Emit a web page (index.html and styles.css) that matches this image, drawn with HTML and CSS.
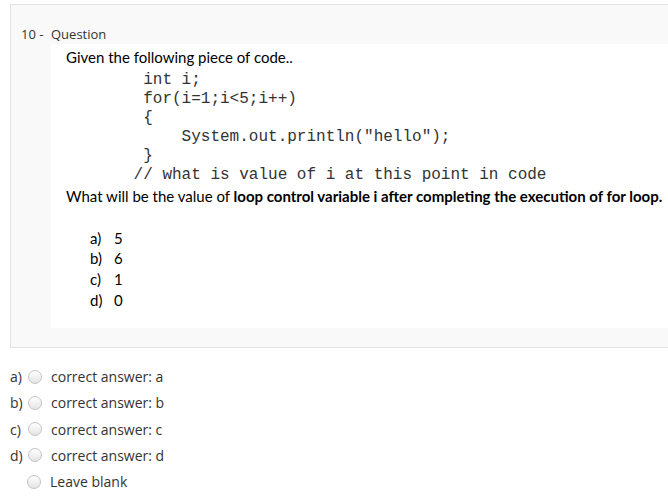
FILE: index.html
```html
<!DOCTYPE html>
<html>
<head>
<meta charset="utf-8">
<link rel="stylesheet" href="styles.css">
</head>
<body>
<div class="qbox">
  <div class="qhead"><span class="qnum">10 -</span><span class="qtitle">Question</span></div>
  <div class="qbody">
    <p class="line">Given the following piece of code..</p>
<pre class="code">  int i;
  for(i=1;i&lt;5;i++)
  {
      System.out.println("hello");
  }
 // what is value of i at this point in code</pre>
    <p class="line">What will be the value of <b>loop control variable i after completing the execution of for loop.</b></p>
    <ul class="opts">
      <li><span class="ol">a)</span><span>5</span></li>
      <li><span class="ol">b)</span><span>6</span></li>
      <li><span class="ol">c)</span><span>1</span></li>
      <li><span class="ol">d)</span><span>0</span></li>
    </ul>
  </div>
</div>
<div class="answers">
  <div class="ans"><span class="al">a)</span><span class="radio"></span><span class="at">correct answer: a</span></div>
  <div class="ans"><span class="al">b)</span><span class="radio"></span><span class="at">correct answer: b</span></div>
  <div class="ans"><span class="al">c)</span><span class="radio"></span><span class="at">correct answer: c</span></div>
  <div class="ans"><span class="al">d)</span><span class="radio"></span><span class="at">correct answer: d</span></div>
  <div class="ans blank"><span class="radio"></span><span class="at">Leave blank</span></div>
</div>
</body>
</html>
```

FILE: styles.css
```css
html, body {
  margin: 0;
  padding: 0;
  background: #fff;
  overflow: hidden;
}
body {
  font-family: "Open Sans", sans-serif;
  color: #333;
}
.qbox {
  margin: 4px -30px 0 10px;
  border: 1px solid #e3e3e3;
  background: #f9f9f9;
  padding: 0 0 19px 0;
}
.qhead {
  display: flex;
  font-size: 13px;
  line-height: 18px;
  padding-top: 20px;
  padding-bottom: 1px;
}
.qnum {
  width: 40px;
  padding-left: 10px;
  box-sizing: border-box;
}
.qbody {
  margin-left: 40px;
  background: #fff;
  padding: 3px 0 18px 15px;
  font-family: "Lato", sans-serif;
  font-size: 15px;
  color: #000;
}
.line {
  margin: 0;
  line-height: 20px;
}
.code {
  margin: 0 0 0 58px;
  padding-top: 4px;
  font-family: "Liberation Mono", monospace;
  font-size: 16px;
  line-height: 19.1px;
  color: #333;
}
.opts {
  list-style: none;
  margin: 22px 0 0 0;
  padding: 0 0 0 24px;
}
.opts li {
  display: flex;
  line-height: 20.7px;
}
.ol {
  width: 24px;
}
.answers {
  padding: 15px 0 0 10px;
  font-size: 14px;
}
.ans {
  display: flex;
  align-items: center;
  height: 26.3px;
}
.al {
  width: 18px;
}
.blank {
  padding-left: 17px;
}
.radio {
  width: 14px;
  height: 14px;
  box-sizing: border-box;
  border-radius: 50%;
  border: 1px solid #c4c4c4;
  background: linear-gradient(#ffffff, #e4e4e4);
  margin-right: 9px;
}
```
